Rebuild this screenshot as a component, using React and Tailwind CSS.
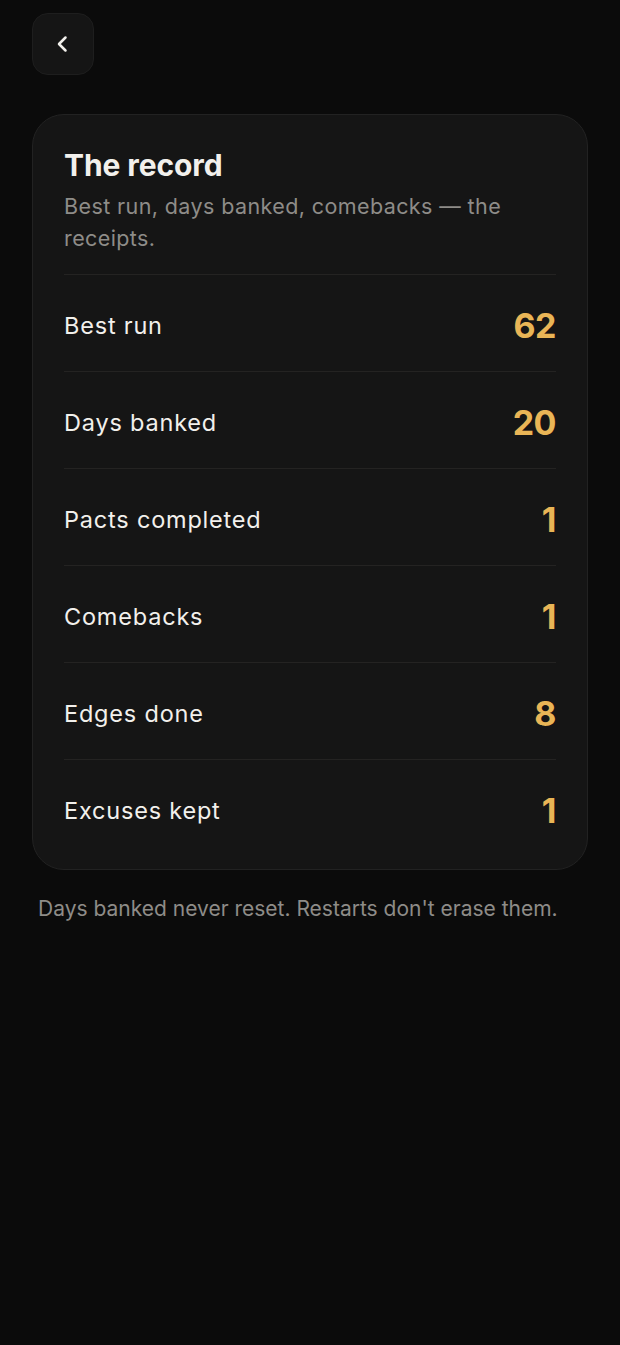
import React from "react";

const stats = [
  { label: "Best run", value: "62" },
  { label: "Days banked", value: "20" },
  { label: "Pacts completed", value: "1" },
  { label: "Comebacks", value: "1" },
  { label: "Edges done", value: "8" },
  { label: "Excuses kept", value: "1" },
];

export default function App() {
  return (
    <div
      className="min-h-[1345px] w-full bg-[#0b0b0b] text-[#f2f0ec]"
      style={{ fontFamily: "Inter, 'Noto Sans', sans-serif" }}
    >
      <div className="px-[32px] pt-[13px]">
        <button className="flex h-[62px] w-[62px] items-center justify-center rounded-[16px] border border-[#1e1e1e] bg-[#151515]">
          <svg width="24" height="24" viewBox="0 0 24 24" fill="none" stroke="#f2f0ec" strokeWidth="2.5" strokeLinecap="round" strokeLinejoin="round">
            <path d="M14.5 5.5l-6.5 6.5 6.5 6.5" />
          </svg>
        </button>

        <div className="mt-[39px] rounded-[32px] border border-[#222222] bg-[#151515] px-[31px] pt-[32px] pb-[13px]">
          <h1 className="text-[30px] font-bold leading-[36px] tracking-[-0.1px]">The record</h1>
          <p className="mt-[7px] pr-[20px] text-[21.5px] leading-[32px] tracking-[0.4px] text-[#8e8c88]">
            Best run, days banked, comebacks — the receipts.
          </p>
          <div className="mt-[20px]">
            {stats.map((s) => (
              <div
                key={s.label}
                className="flex h-[97px] items-center justify-between border-t border-[#242322] pt-[5px]"
              >
                <span className="text-[23.5px] leading-[30px] tracking-[0.8px]">{s.label}</span>
                <span className="text-[34px] font-bold leading-[40px] tracking-[-0.5px] text-[#e9b556]">{s.value}</span>
              </div>
            ))}
          </div>
        </div>

        <p className="mt-[25px] pl-[6px] text-[21px] leading-[28px] text-[#8e8c88]">
          Days banked never reset. Restarts don't erase them.
        </p>
      </div>
    </div>
  );
}
